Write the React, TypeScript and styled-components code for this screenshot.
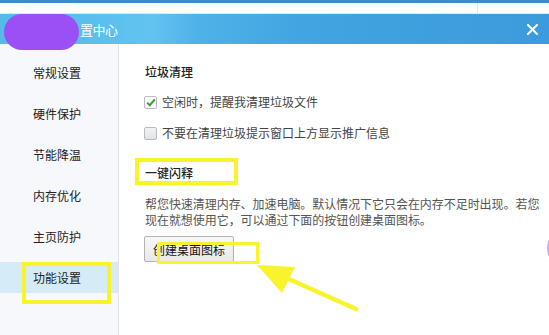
import React from "react";
import styled, { createGlobalStyle } from "styled-components";

const Global = createGlobalStyle`
  html, body { margin: 0; padding: 0; background: #fff; }
  body { width: 549px; height: 335px; overflow: hidden; font-family: "Noto Sans CJK SC", "Noto Sans", sans-serif; }
`;

const Page = styled.div`
  position: relative;
  width: 549px;
  height: 335px;
  display: flex;
  flex-direction: column;
  background: #fff;
  overflow: hidden;
`;

const TopStrip = styled.div`
  height: 10px;
  border-top: 3px solid #3b8ccb;
  border-bottom: 1px solid #e4e8ec;
  background: #fff;
  display: flex;
`;

const StripCell = styled.div<{ $w?: number }>`
  width: ${(p) => (p.$w ? `${p.$w}px` : "auto")};
  flex: ${(p) => (p.$w ? "none" : "1")};
  border-right: ${(p) => (p.$w ? "1px solid #e2e6ea" : "none")};
`;

const TitleBar = styled.div`
  height: 30px;
  display: flex;
  align-items: center;
  padding-left: 80px;
  padding-right: 7px;
  background: linear-gradient(90deg, #55b9ea 0%, #5dc1ef 22%, #63c3f0 28%, #4fb2e8 36%, #42a4e1 55%, #3c9bdc 100%);
  color: #fff;
`;

const TitleText = styled.span`
  font-size: 13px;
  flex: 1;
  letter-spacing: -0.5px;
`;

const CloseBtn = styled.div`
  width: 20px;
  height: 20px;
  display: flex;
  align-items: center;
  justify-content: center;
`;

const Redact = styled.div`
  position: absolute;
  left: 4px;
  top: 14px;
  width: 75px;
  height: 36px;
  border-radius: 18px;
  background: #9b50f6;
`;

const EdgeBlob = styled.div`
  position: absolute;
  right: -7px;
  top: 238px;
  width: 9px;
  height: 20px;
  border-radius: 50%;
  background: #b58af0;
  opacity: 0.7;
`;

const Body = styled.div`
  flex: 1;
  display: flex;
`;

const Sidebar = styled.div`
  width: 118px;
  background: #f6f8fb;
  border-right: 1px solid #dfe3e8;
  display: flex;
  flex-direction: column;
  gap: 10px;
  padding-top: 13px;
`;

const NavItem = styled.div<{ $active?: boolean }>`
  position: relative;
  height: 31px;
  display: flex;
  align-items: center;
  padding-left: 33px;
  font-size: 12px;
  color: #222;
  background: ${(p) => (p.$active ? "#d5ecf8" : "transparent")};
`;

const Highlight = styled.div<{ $l: number; $t: number; $w: number; $h: number; $b?: number }>`
  position: absolute;
  left: ${(p) => p.$l}px;
  top: ${(p) => p.$t}px;
  width: ${(p) => p.$w}px;
  height: ${(p) => p.$h}px;
  box-sizing: border-box;
  border: ${(p) => p.$b ?? 4}px solid #f8f32a;
  pointer-events: none;
`;

const Content = styled.div`
  flex: 1;
  padding-left: 26px;
  display: flex;
  flex-direction: column;
  align-items: flex-start;
`;

const SectionTitle = styled.div<{ $mt: number }>`
  position: relative;
  margin-top: ${(p) => p.$mt}px;
  font-size: 12px;
  line-height: 20px;
  color: #222;
  font-weight: 500;
`;

const CheckRow = styled.label<{ $mt: number }>`
  margin-top: ${(p) => p.$mt}px;
  display: flex;
  align-items: center;
  gap: 5px;
  font-size: 12px;
  line-height: 20px;
  color: #444;
  margin-left: -1px;
`;

const Box = styled.span<{ $checked?: boolean }>`
  width: 13px;
  height: 13px;
  box-sizing: border-box;
  border: 1px solid #b9bdc2;
  border-radius: 2px;
  background: ${(p) => (p.$checked ? "#fff" : "linear-gradient(#f2f2f2, #e2e4e6)")};
  display: flex;
  align-items: center;
  justify-content: center;
`;

const Para = styled.p`
  margin: 13px 0 0 0;
  width: 400px;
  font-size: 12px;
  line-height: 16px;
  color: #555;
  letter-spacing: -0.05px;
`;

const Button = styled.button`
  position: relative;
  margin-top: 8px;
  margin-left: -1px;
  height: 26px;
  width: 90px;
  padding: 0;
  font-family: inherit;
  font-size: 12px;
  color: #111;
  background: linear-gradient(#f7f7f7, #e9e9e9);
  border: 1px solid #b3b3b3;
  border-radius: 2px;
`;

const Arrow = styled.svg`
  position: absolute;
  left: 0;
  top: 0;
  pointer-events: none;
`;

const navs = ["常规设置", "硬件保护", "节能降温", "内存优化", "主页防护", "功能设置"];

export default function App() {
  return (
    <Page>
      <Global />
      <TopStrip>
        <StripCell $w={477} />
        <StripCell />
      </TopStrip>
      <TitleBar>
        <TitleText>置中心</TitleText>
        <CloseBtn>
          <svg width="11" height="11" viewBox="0 0 11 11">
            <path d="M1 1 L10 10 M10 1 L1 10" stroke="#fff" strokeWidth="2" strokeLinecap="round" />
          </svg>
        </CloseBtn>
      </TitleBar>
      <Body>
        <Sidebar>
          {navs.map((n, i) => (
            <NavItem key={n} $active={i === navs.length - 1}>
              {n}
              {i === navs.length - 1 && <Highlight $l={22} $t={0} $w={89} $h={42} />}
            </NavItem>
          ))}
        </Sidebar>
        <Content>
          <SectionTitle $mt={18}>垃圾清理</SectionTitle>
          <CheckRow $mt={10}>
            <Box $checked>
              <svg width="10" height="9" viewBox="0 0 10 9">
                <path d="M1.2 4.6 L3.8 7.2 L8.8 1.4" stroke="#3c9c2e" strokeWidth="2" fill="none" />
              </svg>
            </Box>
            空闲时，提醒我清理垃圾文件
          </CheckRow>
          <CheckRow $mt={11}>
            <Box />
            不要在清理垃圾提示窗口上方显示推广信息
          </CheckRow>
          <SectionTitle $mt={20}>
            一键闪释
            <Highlight $l={-10} $t={-5} $w={103} $h={27} />
          </SectionTitle>
          <Para>
            帮您快速清理内存、加速电脑。默认情况下它只会在内存不足时出现。若您现在就想使用它，可以通过下面的按钮创建桌面图标。
          </Para>
          <Button>
            创建桌面图标
            <Highlight $l={12} $t={5} $w={102} $h={22} $b={3.5} />
          </Button>
        </Content>
      </Body>
      <Redact />
      <EdgeBlob />
      <Arrow width="549" height="335" viewBox="0 0 549 335">
        <line x1="356" y1="309" x2="282" y2="276" stroke="#f8f32a" strokeWidth="4.5" strokeLinecap="round" />
        <polygon points="257,265 295,267 282,293" fill="#f8f32a" />
      </Arrow>
    </Page>
  );
}
